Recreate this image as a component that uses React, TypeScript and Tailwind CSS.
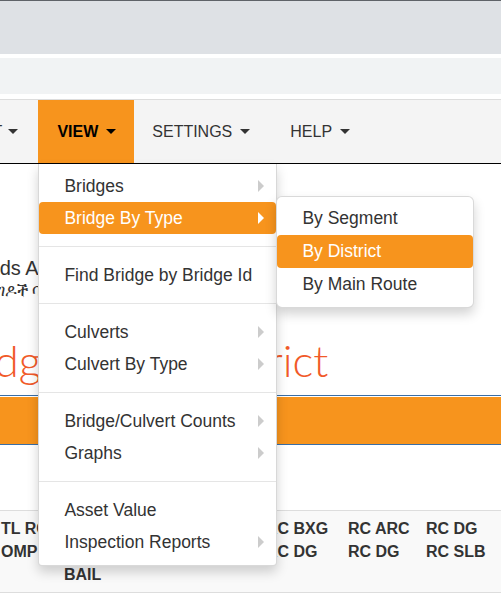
import React from "react";

const menuGroups: { label: string; sub?: boolean; active?: boolean }[][] = [
  [
    { label: "Bridges", sub: true },
    { label: "Bridge By Type", sub: true, active: true },
  ],
  [{ label: "Find Bridge by Bridge Id" }],
  [
    { label: "Culverts", sub: true },
    { label: "Culvert By Type", sub: true },
  ],
  [
    { label: "Bridge/Culvert Counts", sub: true },
    { label: "Graphs", sub: true },
  ],
  [{ label: "Asset Value" }, { label: "Inspection Reports", sub: true }],
];

const subItems = ["By Segment", "By District", "By Main Route"];

function DownCaret({ gap = "ml-[8px]" }: { gap?: string }) {
  return (
    <span
      className={
        gap +
        " inline-block h-0 w-0 border-x-[5px] border-t-[5px] border-x-transparent border-t-current"
      }
    />
  );
}

function RightCaret({ white }: { white?: boolean }) {
  return (
    <span
      className={
        "inline-block h-0 w-0 border-y-[6px] border-l-[6px] border-y-transparent " +
        (white ? "border-l-white" : "border-l-[#cccccc]")
      }
    />
  );
}

function SubMenu() {
  return (
    <div className="absolute left-full top-[-6px] z-20 w-[198px] rounded-[6px] border border-[rgba(0,0,0,0.15)] bg-white pt-[5px] pb-[6px] shadow-[0_6px_12px_rgba(0,0,0,0.175)]">
      {subItems.map((s) => (
        <div
          key={s}
          className={
            "flex h-[33px] items-center rounded-[4px] pl-[25px] text-[17.5px] " +
            (s === "By District" ? "bg-[#f7941d] text-white" : "text-[#333333]")
          }
        >
          {s}
        </div>
      ))}
    </div>
  );
}

function ViewMenu() {
  return (
    <div className="absolute left-0 top-[calc(100%+1px)] z-10 w-[239px] rounded-b-[4px] border border-t-0 border-[rgba(0,0,0,0.15)] bg-white pt-[6px] pb-[7px] font-normal shadow-[0_6px_12px_rgba(0,0,0,0.175)]">
      {menuGroups.map((group, gi) => (
        <div key={gi}>
          {gi > 0 && <div className="my-[12px] h-px bg-[#e5e5e5]" />}
          {group.map((item) => (
            <div
              key={item.label}
              className={
                "relative flex h-[32px] items-center justify-between rounded-[4px] pl-[25px] pr-[12px] text-[17.5px] " +
                (item.active ? "bg-[#f7941d] text-white" : "text-[#333333]")
              }
            >
              <span>{item.label}</span>
              {item.sub && <RightCaret white={item.active} />}
              {item.active && <SubMenu />}
            </div>
          ))}
        </div>
      ))}
    </div>
  );
}

function NavBar() {
  return (
    <nav className="h-[65px] border-y border-t-[#dddddd] border-b-black bg-[#f4f4f4] text-[16px] text-[#333333]">
      <div className="-ml-[82px] flex h-full">
        <div className="flex items-center pl-[18px] pr-[20px]">
          REPORT
          <DownCaret gap="ml-[6px]" />
        </div>
        <div className="relative flex items-center bg-[#f7941d] pl-[19px] pr-[18px] font-bold text-black">
          VIEW
          <DownCaret />
          <ViewMenu />
        </div>
        <div className="flex items-center pl-[18px] pr-[20px]">
          SETTINGS
          <DownCaret />
        </div>
        <div className="flex items-center pl-[20px] pr-[20px]">
          HELP
          <DownCaret />
        </div>
      </div>
    </nav>
  );
}

const columns = [
  { w: "w-[63px]", lines: ["TL RC", "OMP"] },
  { w: "w-[101px]", lines: ["STL", "TRUSS", "BAIL"] },
  { w: "w-[101px]", lines: ["MAS", "ARCH"] },
  { w: "w-[82px]", lines: ["RC BXG", "RC DG"] },
  { w: "w-[78px]", lines: ["RC ARC", "RC DG"] },
  { w: "w-[76px]", lines: ["RC DG", "RC SLB"] },
];

export default function App() {
  return (
    <div className="h-[600px] w-[501px] overflow-hidden bg-white font-['Liberation_Sans',Arial,sans-serif]">
      <div className="h-px bg-[#5f6368]" />
      <div className="h-[53px] bg-[#dee1e5]" />
      <div className="h-[4px] bg-white" />
      <div className="h-[36px] bg-[#f1f3f4]" />
      <div className="h-[5px] bg-white" />
      <NavBar />

      <div className="flex flex-col">
        <div className="mt-[92px] -ml-[126px] whitespace-nowrap text-[20px] leading-[24px] text-[#333333]">
          Ethiopian Roads Authority
        </div>
        <div className="-ml-[92px] whitespace-nowrap font-['Noto_Sans',sans-serif] text-[16px] leading-[20px] text-[#333333]">
          የኢትዮጵያ መንገዶች ባለሥልጣን
        </div>
        <div className="mt-[36px] -ml-[58px] whitespace-nowrap font-['Lato',sans-serif] text-[44px] font-light leading-[48px] text-[#f15a29] [word-spacing:18px]">
          Bridges By District
        </div>
        <div className="mt-[11px] h-px bg-[#3a6ea5]" />
        <div className="mt-px h-[48px] border-b border-[#3a6ea5] bg-[#f7941d]" />
        <div className="mt-[65px] flex h-[83px] border-y border-[#dddddd] bg-[#f9f9f9] py-[6px] pl-px text-[16px] font-bold leading-[23px] text-[#333333]">
          {columns.map((c, i) => (
            <div key={i} className={c.w + " shrink-0"}>
              {c.lines.map((l) => (
                <div key={l} className="whitespace-nowrap">
                  {l}
                </div>
              ))}
            </div>
          ))}
        </div>
      </div>
    </div>
  );
}
